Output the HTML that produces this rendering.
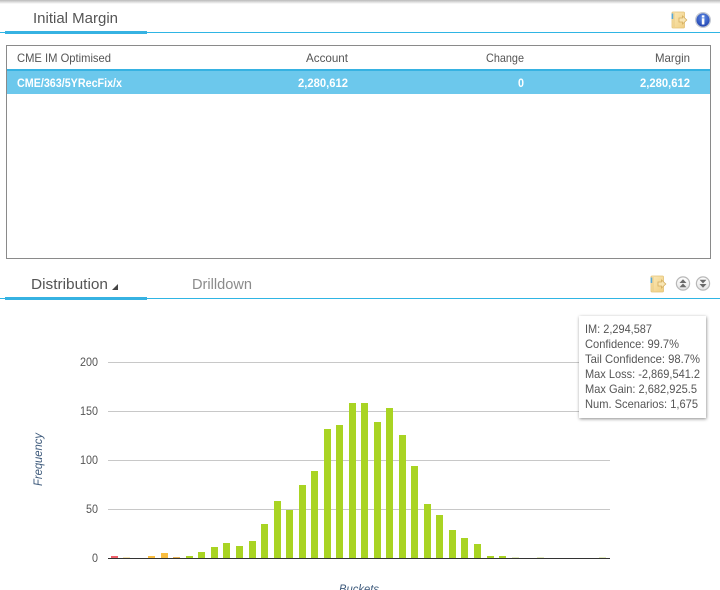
<!DOCTYPE html>
<html><head><meta charset="utf-8"><title>Initial Margin</title>
<style>
html,body{margin:0;padding:0;background:#fff;width:720px;height:590px;overflow:hidden}
svg{display:block}
text{font-family:"Liberation Sans",sans-serif;white-space:pre}
</style></head><body>
<svg xmlns="http://www.w3.org/2000/svg" width="720" height="590" viewBox="0 0 720 590">
<defs>
<linearGradient id="top" x1="0" y1="0" x2="0" y2="1"><stop offset="0" stop-color="#b9b9b9"/><stop offset="1" stop-color="#ffffff"/></linearGradient>
<linearGradient id="fold" x1="0" y1="0" x2="1" y2="1"><stop offset="0" stop-color="#fbe9b8"/><stop offset="1" stop-color="#f0cf83"/></linearGradient>
<radialGradient id="info" cx=".5" cy=".35" r=".65"><stop offset="0" stop-color="#5f8ce6"/><stop offset="1" stop-color="#1d3fae"/></radialGradient>
<linearGradient id="btn" x1="0" y1="0" x2="0" y2="1"><stop offset="0" stop-color="#ffffff"/><stop offset="1" stop-color="#e4e4e4"/></linearGradient>
<filter id="sh" x="-10%" y="-10%" width="120%" height="120%"><feDropShadow dx="0.5" dy="1" stdDeviation="1.5" flood-color="#000" flood-opacity=".45"/></filter>
<g id="folder">
<path d="M2 .5H12.5Q13.5 .5 13.5 1.5V15.5Q13.5 16.5 12.5 16.5H2Q1 16.5 1 15.5V1.5Q1 .5 2 .5Z" fill="url(#fold)" stroke="#e3c176" stroke-width=".8"/>
<path d="M8 6.5H11.5V4.5L15.8 8.5L11.5 12.5V10.5H8Z" fill="#f9e6b4" stroke="#d3ad5f" stroke-width=".8"/>
<rect x=".6" y="2" width="1.6" height="5.5" fill="#58a9d6"/>
<rect x="2.6" y="1.5" width=".8" height="14" fill="#e6c67e"/>
</g>
</defs>

<rect x="0" y="0" width="720" height="4" fill="url(#top)"/>

<text x="33" y="23" font-size="15" fill="#555" textLength="85" lengthAdjust="spacingAndGlyphs">Initial Margin</text>
<rect x="0" y="32" width="720" height="1" fill="#2fb5e4"/>
<rect x="5" y="31" width="142" height="3" fill="#36b2e2"/>
<use href="#folder" x="671" y="11.5"/>
<circle cx="703" cy="20" r="7.3" fill="url(#info)" stroke="#c3c8d2" stroke-width="1.4"/>
<rect x="701.8" y="15.3" width="2.6" height="2.2" fill="#fff"/>
<rect x="701.8" y="18.3" width="2.6" height="6.2" fill="#fff"/>

<rect x="6.5" y="45.5" width="704" height="213" fill="#fff" stroke="#8a8a8a" stroke-width="1"/>
<g font-size="12" fill="#555">
<text x="17" y="62" textLength="94" lengthAdjust="spacingAndGlyphs">CME IM Optimised</text>
<text x="306" y="62" textLength="42" lengthAdjust="spacingAndGlyphs">Account</text>
<text x="486" y="62" textLength="38" lengthAdjust="spacingAndGlyphs">Change</text>
<text x="655" y="62" textLength="35" lengthAdjust="spacingAndGlyphs">Margin</text>
</g>
<rect x="7" y="69" width="703" height="2" fill="#36b2e2"/>
<rect x="7" y="71" width="703" height="23" fill="#6cc8ec"/>
<g font-size="12" font-weight="bold" fill="#fff">
<text x="17" y="87" textLength="105" lengthAdjust="spacingAndGlyphs">CME/363/5YRecFix/x</text>
<text x="298" y="87" textLength="50" lengthAdjust="spacingAndGlyphs">2,280,612</text>
<text x="518" y="87" textLength="6" lengthAdjust="spacingAndGlyphs">0</text>
<text x="640" y="87" textLength="50" lengthAdjust="spacingAndGlyphs">2,280,612</text>
</g>

<text x="31" y="289" font-size="15" fill="#555" textLength="77" lengthAdjust="spacingAndGlyphs">Distribution</text>
<path d="M118 284V290H112Z" fill="#444"/>
<text x="192" y="289" font-size="15" fill="#8b8b8b" textLength="60" lengthAdjust="spacingAndGlyphs">Drilldown</text>
<rect x="0" y="298" width="720" height="1" fill="#2fb5e4"/>
<rect x="5" y="297" width="142" height="3" fill="#36b2e2"/>
<use href="#folder" x="650" y="275.5"/>
<circle cx="683" cy="283.5" r="6.6" fill="url(#btn)" stroke="#b8b8b8" stroke-width="1.2"/>
<path d="M683 279.3L686.5 283H679.5ZM683 283.5L686.5 287.3H679.5Z" fill="#6a6a6a"/>
<circle cx="703" cy="283.5" r="6.6" fill="url(#btn)" stroke="#b8b8b8" stroke-width="1.2"/>
<path d="M699.5 279.7H706.5L703 283.4ZM699.5 284H706.5L703 287.7Z" fill="#6a6a6a"/>

<g fill="#c8c8c8">
<rect x="108" y="362" width="502" height="1"/>
<rect x="108" y="411" width="502" height="1"/>
<rect x="108" y="460" width="502" height="1"/>
<rect x="108" y="509" width="502" height="1"/>
</g>
<g font-size="12" fill="#555">
<text x="80" y="366" textLength="18" lengthAdjust="spacingAndGlyphs">200</text>
<text x="80" y="415" textLength="18" lengthAdjust="spacingAndGlyphs">150</text>
<text x="80" y="464" textLength="18" lengthAdjust="spacingAndGlyphs">100</text>
<text x="86" y="513" textLength="12" lengthAdjust="spacingAndGlyphs">50</text>
<text x="92" y="562" textLength="6" lengthAdjust="spacingAndGlyphs">0</text>
</g>
<text transform="translate(42,486) rotate(-90)" font-size="12" font-style="italic" fill="#3f5b7c" textLength="53" lengthAdjust="spacingAndGlyphs">Frequency</text>
<text x="339" y="593" font-size="12" font-style="italic" fill="#3f5b7c" textLength="40" lengthAdjust="spacingAndGlyphs">Buckets</text>

<g>
<rect x="111" y="556" width="7" height="2" fill="#f0606a"/>
<rect x="123" y="557" width="7" height="1" fill="#f6e6b8"/>
<rect x="148" y="556" width="7" height="2" fill="#f9bd3f"/>
<rect x="161" y="553" width="7" height="5" fill="#f9bd3f"/>
<rect x="173" y="557" width="7" height="1" fill="#e9b458"/>
</g>
<g fill="#a9d423">
<rect x="186" y="556" width="7" height="2"/>
<rect x="198" y="552" width="7" height="6"/>
<rect x="211" y="547" width="7" height="11"/>
<rect x="223" y="543" width="7" height="15"/>
<rect x="236" y="546" width="7" height="12"/>
<rect x="249" y="541" width="7" height="17"/>
<rect x="261" y="524" width="7" height="34"/>
<rect x="274" y="501" width="7" height="57"/>
<rect x="286" y="510" width="7" height="48"/>
<rect x="299" y="485" width="7" height="73"/>
<rect x="311" y="471" width="7" height="87"/>
<rect x="324" y="429" width="7" height="129"/>
<rect x="336" y="425" width="7" height="133"/>
<rect x="349" y="403" width="7" height="155"/>
<rect x="361" y="403" width="7" height="155"/>
<rect x="374" y="422" width="7" height="136"/>
<rect x="386" y="408" width="7" height="150"/>
<rect x="399" y="435" width="7" height="123"/>
<rect x="411" y="466" width="7" height="92"/>
<rect x="424" y="504" width="7" height="54"/>
<rect x="436" y="515" width="7" height="43"/>
<rect x="449" y="530" width="7" height="28"/>
<rect x="461" y="538" width="7" height="20"/>
<rect x="474" y="544" width="7" height="14"/>
<rect x="487" y="556" width="7" height="2"/>
<rect x="499" y="556" width="7" height="2"/>
</g>
<g fill="#e4ecc0">
<rect x="512" y="557" width="7" height="1"/>
<rect x="537" y="557" width="7" height="1"/>
<rect x="599" y="557" width="7" height="1"/>
</g>
<rect x="108" y="558" width="502" height="1" fill="#333"/>

<rect x="579" y="316" width="127" height="102" fill="#fff" filter="url(#sh)"/>
<g font-size="12" fill="#555">
<text x="585" y="333" textLength="67" lengthAdjust="spacingAndGlyphs">IM: 2,294,587</text>
<text x="585" y="348" textLength="94" lengthAdjust="spacingAndGlyphs">Confidence: 99.7%</text>
<text x="585" y="363" textLength="115" lengthAdjust="spacingAndGlyphs">Tail Confidence: 98.7%</text>
<text x="585" y="378" textLength="115" lengthAdjust="spacingAndGlyphs">Max Loss: -2,869,541.2</text>
<text x="585" y="393" textLength="112" lengthAdjust="spacingAndGlyphs">Max Gain: 2,682,925.5</text>
<text x="585" y="408" textLength="113" lengthAdjust="spacingAndGlyphs">Num. Scenarios: 1,675</text>
</g>
</svg>
</body></html>
